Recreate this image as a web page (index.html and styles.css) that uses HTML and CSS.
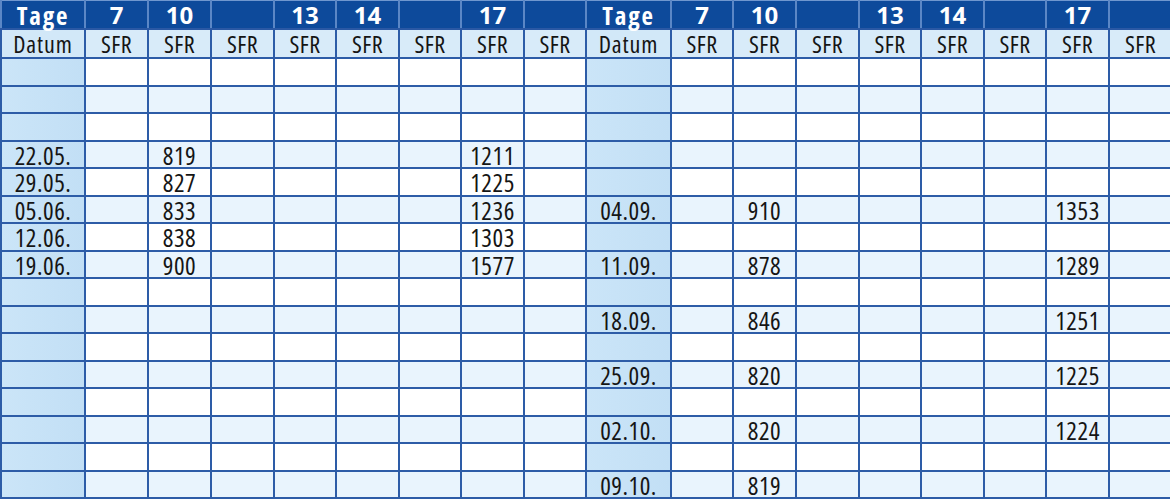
FILE: index.html
```html
<!DOCTYPE html>
<html lang="de">
<head>
<meta charset="utf-8">
<title>Fahrplan Preise</title>
<link rel="stylesheet" href="styles.css">
</head>
<body>
<table class="plan">
<colgroup>
<col class="c-date"><col class="c-a"><col class="c-a"><col class="c-a"><col class="c-b"><col class="c-a"><col class="c-b"><col class="c-a"><col class="c-b">
<col class="c-date2"><col class="c-b"><col class="c-a"><col class="c-a"><col class="c-b"><col class="c-a"><col class="c-b"><col class="c-a"><col class="c-a">
</colgroup>
<thead>
<tr class="days">
<th class="tg">Tage</th><th>7</th><th>10</th><th></th><th>13</th><th>14</th><th></th><th>17</th><th></th>
<th class="tg">Tage</th><th>7</th><th>10</th><th></th><th>13</th><th>14</th><th></th><th>17</th><th></th>
</tr>
<tr class="sub">
<th class="d">Datum</th><th>SFR</th><th>SFR</th><th>SFR</th><th>SFR</th><th>SFR</th><th>SFR</th><th>SFR</th><th>SFR</th>
<th class="d">Datum</th><th>SFR</th><th>SFR</th><th>SFR</th><th>SFR</th><th>SFR</th><th>SFR</th><th>SFR</th><th>SFR</th>
</tr>
</thead>
<tbody>
<tr class="odd"><td class="d"></td><td></td><td></td><td></td><td></td><td></td><td></td><td></td><td></td><td class="d"></td><td></td><td></td><td></td><td></td><td></td><td></td><td></td><td></td></tr>
<tr class="even"><td class="d"></td><td></td><td></td><td></td><td></td><td></td><td></td><td></td><td></td><td class="d"></td><td></td><td></td><td></td><td></td><td></td><td></td><td></td><td></td></tr>
<tr class="odd"><td class="d"></td><td></td><td></td><td></td><td></td><td></td><td></td><td></td><td></td><td class="d"></td><td></td><td></td><td></td><td></td><td></td><td></td><td></td><td></td></tr>
<tr class="even"><td class="d">22.05.</td><td></td><td>819</td><td></td><td></td><td></td><td></td><td>1211</td><td></td><td class="d"></td><td></td><td></td><td></td><td></td><td></td><td></td><td></td><td></td></tr>
<tr class="odd"><td class="d">29.05.</td><td></td><td>827</td><td></td><td></td><td></td><td></td><td>1225</td><td></td><td class="d"></td><td></td><td></td><td></td><td></td><td></td><td></td><td></td><td></td></tr>
<tr class="even"><td class="d">05.06.</td><td></td><td>833</td><td></td><td></td><td></td><td></td><td>1236</td><td></td><td class="d">04.09.</td><td></td><td>910</td><td></td><td></td><td></td><td></td><td>1353</td><td></td></tr>
<tr class="odd"><td class="d">12.06.</td><td></td><td>838</td><td></td><td></td><td></td><td></td><td>1303</td><td></td><td class="d"></td><td></td><td></td><td></td><td></td><td></td><td></td><td></td><td></td></tr>
<tr class="even"><td class="d">19.06.</td><td></td><td>900</td><td></td><td></td><td></td><td></td><td>1577</td><td></td><td class="d">11.09.</td><td></td><td>878</td><td></td><td></td><td></td><td></td><td>1289</td><td></td></tr>
<tr class="odd"><td class="d"></td><td></td><td></td><td></td><td></td><td></td><td></td><td></td><td></td><td class="d"></td><td></td><td></td><td></td><td></td><td></td><td></td><td></td><td></td></tr>
<tr class="even"><td class="d"></td><td></td><td></td><td></td><td></td><td></td><td></td><td></td><td></td><td class="d">18.09.</td><td></td><td>846</td><td></td><td></td><td></td><td></td><td>1251</td><td></td></tr>
<tr class="odd"><td class="d"></td><td></td><td></td><td></td><td></td><td></td><td></td><td></td><td></td><td class="d"></td><td></td><td></td><td></td><td></td><td></td><td></td><td></td><td></td></tr>
<tr class="even"><td class="d"></td><td></td><td></td><td></td><td></td><td></td><td></td><td></td><td></td><td class="d">25.09.</td><td></td><td>820</td><td></td><td></td><td></td><td></td><td>1225</td><td></td></tr>
<tr class="odd"><td class="d"></td><td></td><td></td><td></td><td></td><td></td><td></td><td></td><td></td><td class="d"></td><td></td><td></td><td></td><td></td><td></td><td></td><td></td><td></td></tr>
<tr class="even"><td class="d"></td><td></td><td></td><td></td><td></td><td></td><td></td><td></td><td></td><td class="d">02.10.</td><td></td><td>820</td><td></td><td></td><td></td><td></td><td>1224</td><td></td></tr>
<tr class="odd"><td class="d"></td><td></td><td></td><td></td><td></td><td></td><td></td><td></td><td></td><td class="d"></td><td></td><td></td><td></td><td></td><td></td><td></td><td></td><td></td></tr>
<tr class="even"><td class="d"></td><td></td><td></td><td></td><td></td><td></td><td></td><td></td><td></td><td class="d">09.10.</td><td></td><td>819</td><td></td><td></td><td></td><td></td><td></td><td></td></tr>
</tbody>
</table>
</body>
</html>
```
FILE: styles.css
```css
html, body {
  margin: 0;
  padding: 0;
  background: #ffffff;
  overflow: hidden;
}

.plan {
  border-collapse: collapse;
  table-layout: fixed;
  width: 1172px;
  font-family: "Open Sans", "Noto Sans", sans-serif;
}

.c-date { width: 84px; }
.c-date2 { width: 85px; }
.c-a { width: 63px; }
.c-b { width: 62px; }

.plan th,
.plan td {
  border: 2px solid #2d5ca7;
  padding: 0;
  text-align: center;
  font-size: 25px;
  font-stretch: 75%;
  letter-spacing: 0.5px;
  line-height: 22px;
  color: #151515;
  white-space: nowrap;
  font-weight: 400;
}

.days th {
  background: #0d4a9b;
  color: #ffffff;
  font-weight: 700;
  font-size: 24px;
  font-stretch: 100%;
  letter-spacing: 0;
  line-height: 24px;
  height: 27px;
  border-top: 1px solid #6f97cf;
  border-left-color: #5b87c6;
  border-right-color: #5b87c6;
  border-bottom-color: #2a58a4;
}

.days .tg {
  font-size: 25px;
  font-stretch: 75%;
  letter-spacing: 1.8px;
}

.sub th {
  background: #d8ebf9;
  height: 27px;
  font-size: 24px;
  font-stretch: 75%;
  letter-spacing: 0.4px;
}

.sub .d {
  background: #d2e8f8;
  letter-spacing: 0.9px;
}

.odd td { background: #ffffff; height: 26px; }
.even td { background: #e9f4fd; height: 25px; }

.plan td.d {
  background: linear-gradient(to right, #cbe5f8, #c2dff5);
}
```
